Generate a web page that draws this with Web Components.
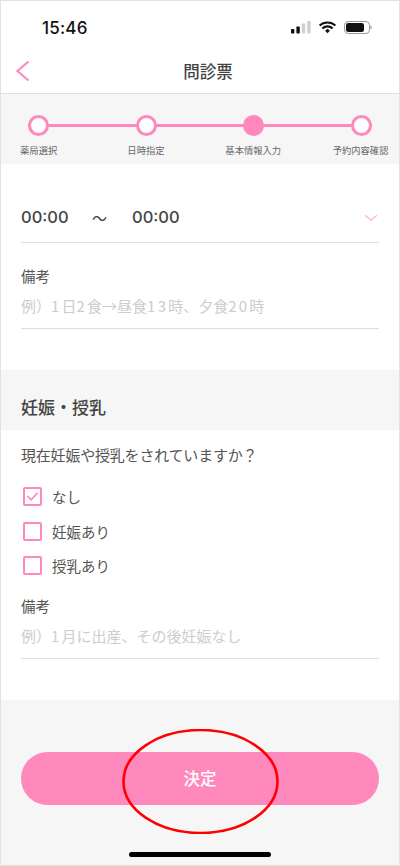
<!DOCTYPE html>
<html lang="ja">
<head>
<meta charset="utf-8">
<title>問診票</title>
<style>
  html, body { margin: 0; padding: 0; background: #fff; }
  body { font-family: "Noto Sans CJK JP", "Liberation Sans", sans-serif; color: #444; }
</style>
</head>
<body>
<app-screen>
  <status-bar></status-bar>
  <nav-header title="問診票"></nav-header>
  <step-bar></step-bar>
  <time-range></time-range>
  <note-field placeholder="例）1日2食→昼食13時、夕食20時" style="--top:23px"></note-field>
  <section-title>妊娠・授乳</section-title>
  <check-group question="現在妊娠や授乳をされていますか？">
    <check-row checked>なし</check-row>
    <check-row>妊娠あり</check-row>
    <check-row>授乳あり</check-row>
  </check-group>
  <note-field placeholder="例）1月に出産、その後妊娠なし" style="--top:13px"></note-field>
  <submit-footer>決定</submit-footer>
</app-screen>

<script>
const FONT = `"Noto Sans CJK JP", "Liberation Sans", sans-serif`;
const PINK = "#ff88bd";

class AppScreen extends HTMLElement {
  constructor() {
    super();
    this.attachShadow({ mode: "open" }).innerHTML = `
      <style>
        :host {
          display: flex;
          flex-direction: column;
          box-sizing: border-box;
          width: 400px;
          height: 866px;
          overflow: hidden;
          background: #fff;
          border: 1px solid #e2e2e2;
          font-family: ${FONT};
          position: relative;
        }
      </style>
      <slot></slot>
    `;
  }
}

class StatusBar extends HTMLElement {
  constructor() {
    super();
    this.attachShadow({ mode: "open" }).innerHTML = `
      <style>
        :host {
          display: flex;
          align-items: center;
          justify-content: space-between;
          height: 52px;
          padding: 0 26px 0 41px;
          box-sizing: border-box;
        }
        .time {
          font: 500 17px/1 Inter, "Liberation Sans", sans-serif;
          color: #111;
          letter-spacing: 0.2px;
          margin-top: 2px;
        }
        svg { display: block; margin-top: 1px; }
      </style>
      <span class="time">15:46</span>
      <svg width="82" height="14" viewBox="0 0 82 14">
        <rect x="0" y="8" width="3.4" height="4.5" rx="0.8" fill="#111"/>
        <rect x="5.4" y="5.5" width="3.4" height="7" rx="0.8" fill="#111"/>
        <rect x="10.8" y="2.5" width="3.4" height="10" rx="0.8" fill="#cfcfcf"/>
        <rect x="16.2" y="0" width="3.4" height="12.5" rx="0.8" fill="#cfcfcf"/>
        <path d="M28.6 4.6a11.5 11.5 0 0 1 15.8 0" fill="none" stroke="#111" stroke-width="2.1"/>
        <path d="M31.4 7.4a7.5 7.5 0 0 1 10.2 0" fill="none" stroke="#111" stroke-width="2.1"/>
        <path d="M34.1 9.8l2.4-2 2.4 2-2.4 2.4z" fill="#111"/>
        <rect x="53.5" y="0.5" width="25" height="12" rx="3.6" fill="none" stroke="#999" stroke-width="1"/>
        <rect x="55" y="2" width="18" height="9" rx="2.2" fill="#111"/>
        <path d="M79.4 4.6c1 .3 1.6 1 1.6 1.9s-.6 1.6-1.6 1.9z" fill="#aaa"/>
      </svg>
    `;
  }
}

class NavHeader extends HTMLElement {
  constructor() {
    super();
    this.attachShadow({ mode: "open" });
  }

  connectedCallback() {
    this.shadowRoot.innerHTML = `
      <style>
        :host {
          display: flex;
          align-items: center;
          justify-content: center;
          position: relative;
          height: 41px;
          box-sizing: border-box;
          border-bottom: 1px solid #e0e0e0;
          background: #fff;
          padding: 0 0 4px 16px;
        }
        .title { font-size: 16.5px; font-weight: 500; color: #444; line-height: 1; }
        svg { position: absolute; left: 14px; top: 6px; }
      </style>
      <svg width="16" height="24" viewBox="0 0 16 24">
        <path d="M13.5 2.5 2.5 12l11 9.5" fill="none" stroke="${PINK}" stroke-width="2.2"/>
      </svg>
      <span class="title">${this.getAttribute("title")}</span>
    `;
  }
}

class StepBar extends HTMLElement {
  constructor() {
    super();
    const steps = [
      ["薬局選択", false],
      ["日時指定", false],
      ["基本情報入力", true],
      ["予約内容確認", false]
    ];
    this.attachShadow({ mode: "open" }).innerHTML = `
      <style>
        :host {
          display: block;
          height: 70px;
          background: #f6f6f6;
          box-sizing: border-box;
          padding-top: 21px;
        }
        .track {
          display: flex;
          justify-content: space-between;
          align-items: center;
          margin: 0 27px;
          height: 21px;
          background: linear-gradient(${PINK}, ${PINK}) center / 100% 3px no-repeat;
        }
        .dot {
          box-sizing: border-box;
          width: 21px;
          height: 21px;
          border-radius: 50%;
          border: 3px solid ${PINK};
          background: #fff;
        }
        .dot.on { background: ${PINK}; }
        .labels {
          display: grid;
          grid-template-columns: repeat(4, 107.3px);
          margin: 8px 0 0 -16px;
          font-size: 9.3px;
          line-height: 13px;
          color: #666;
          text-align: center;
          white-space: nowrap;
        }
      </style>
      <div class="track">
        ${steps.map(s => `<span class="dot${s[1] ? " on" : ""}"></span>`).join("")}
      </div>
      <div class="labels">
        ${steps.map(s => `<span>${s[0]}</span>`).join("")}
      </div>
    `;
  }
}

class TimeRange extends HTMLElement {
  constructor() {
    super();
    this.attachShadow({ mode: "open" }).innerHTML = `
      <style>
        :host {
          display: flex;
          align-items: center;
          height: 79px;
          margin: 0 20px;
          padding-top: 29px;
          box-sizing: border-box;
          border-bottom: 1px solid #dedede;
          font: 500 16.5px/1 Inter, "Liberation Sans", sans-serif;
          color: #444;
        }
        .sep { width: 67px; text-align: center; font-family: ${FONT}; font-weight: 400; font-size: 15px; margin: 0 -1px; }
        .from, .to { width: 46px; }
        .chev { margin-left: auto; margin-right: 1px; }
      </style>
      <span class="from">00:00</span>
      <span class="sep">〜</span>
      <span class="to">00:00</span>
      <svg class="chev" width="14" height="8" viewBox="0 0 14 8">
        <path d="M1 1.2 7 6l6-4.8" fill="none" stroke="#ffb4d6" stroke-width="1.4"/>
      </svg>
    `;
  }
}

class NoteField extends HTMLElement {
  constructor() {
    super();
    this.attachShadow({ mode: "open" });
  }

  connectedCallback() {
    const text = this.getAttribute("placeholder").replace(/\d/g, d => `<span class="num">${d}</span>`);
    this.shadowRoot.innerHTML = `
      <style>
        :host {
          display: block;
          margin: 0 20px;
          padding-top: var(--top, 25px);
          padding-bottom: 41px;
        }
        .label { font-size: 14.5px; line-height: 20px; color: #555; }
        .input {
          margin-top: 10px;
          height: 33px;
          box-sizing: border-box;
          border-bottom: 1px solid #dedede;
          font-size: 15px;
          line-height: 20px;
          color: #cdcdcd;
          white-space: nowrap;
        }
        .num { letter-spacing: 2.2px; }
      </style>
      <div class="label">備考</div>
      <div class="input">${text}</div>
    `;
  }
}

class SectionTitle extends HTMLElement {
  constructor() {
    super();
    this.attachShadow({ mode: "open" }).innerHTML = `
      <style>
        :host {
          display: flex;
          align-items: center;
          height: 60px;
          padding: 12px 20px 0;
          box-sizing: border-box;
          background: #f6f6f6;
          font-size: 17px;
          font-weight: 500;
          color: #444;
        }
      </style>
      <slot></slot>
    `;
  }
}

class CheckGroup extends HTMLElement {
  constructor() {
    super();
    this.attachShadow({ mode: "open" });
  }

  connectedCallback() {
    this.shadowRoot.innerHTML = `
      <style>
        :host { display: block; padding: 15px 20px 0; }
        .q { font-size: 15px; line-height: 20px; color: #555; margin-bottom: 14px; letter-spacing: -0.2px; white-space: nowrap; }
      </style>
      <div class="q">${this.getAttribute("question")}</div>
      <slot></slot>
    `;
  }
}

class CheckRow extends HTMLElement {
  constructor() {
    super();
    this.attachShadow({ mode: "open" });
  }

  connectedCallback() {
    const mark = this.hasAttribute("checked")
      ? `<svg width="15" height="15" viewBox="0 0 15 15"><path d="M2.5 7 6 10.8 12.5 3.8" fill="none" stroke="${PINK}" stroke-width="1.7"/></svg>`
      : "";
    this.shadowRoot.innerHTML = `
      <style>
        :host {
          display: flex;
          align-items: center;
          gap: 10px;
          height: 34.7px;
          font-size: 14.5px;
          color: #555;
        }
        .box {
          display: flex;
          align-items: center;
          justify-content: center;
          box-sizing: border-box;
          width: 19px;
          height: 19px;
          margin-left: 2px;
          border: 2px solid ${PINK};
          border-radius: 2px;
          background: #fff;
        }
        svg { flex: none; }
      </style>
      <span class="box">${mark}</span>
      <slot></slot>
    `;
  }
}

class SubmitFooter extends HTMLElement {
  constructor() {
    super();
    this.attachShadow({ mode: "open" }).innerHTML = `
      <style>
        :host {
          display: block;
          flex: 1;
          background: #f6f6f6;
          padding: 52px 20px 0;
          position: relative;
        }
        button {
          display: block;
          width: 100%;
          height: 53px;
          border: 0;
          border-radius: 27px;
          background: ${PINK};
          color: #fff;
          font: 500 16.5px/1 ${FONT};
          padding: 0 0 1px;
        }
        .circle {
          position: absolute;
          left: 121px;
          top: 29px;
          width: 157px;
          height: 105px;
          pointer-events: none;
        }
        .home {
          position: absolute;
          left: 128px;
          top: 152px;
          width: 142px;
          height: 5px;
          border-radius: 3px;
          background: #000;
        }
      </style>
      <button><slot></slot></button>
      <svg class="circle" viewBox="0 0 157 105">
        <ellipse cx="78.5" cy="52.5" rx="77" ry="51.5" fill="none" stroke="#f00" stroke-width="2.6"/>
      </svg>
      <div class="home"></div>
    `;
  }
}

customElements.define("app-screen", AppScreen);
customElements.define("status-bar", StatusBar);
customElements.define("nav-header", NavHeader);
customElements.define("step-bar", StepBar);
customElements.define("time-range", TimeRange);
customElements.define("note-field", NoteField);
customElements.define("section-title", SectionTitle);
customElements.define("check-group", CheckGroup);
customElements.define("check-row", CheckRow);
customElements.define("submit-footer", SubmitFooter);
</script>
</body>
</html>
